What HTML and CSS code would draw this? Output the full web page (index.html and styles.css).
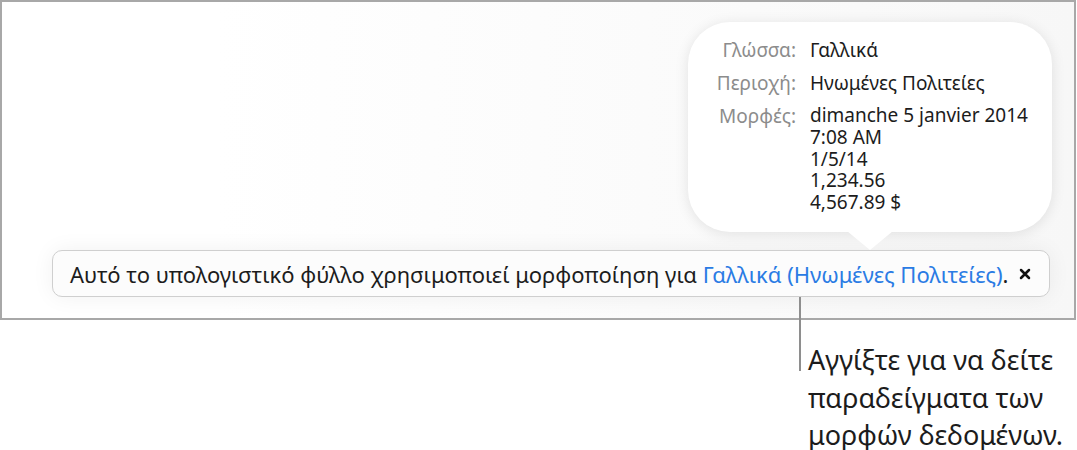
FILE: index.html
```html
<!DOCTYPE html>
<html lang="el">
<head>
<meta charset="utf-8">
<title>Μορφοποίηση</title>
<link rel="stylesheet" href="styles.css">
</head>
<body>
  <div class="screen">
    <div class="popover">
      <div class="info-grid">
        <span class="label">Γλώσσα:</span>
        <span class="value">Γαλλικά</span>
        <span class="label">Περιοχή:</span>
        <span class="value">Ηνωμένες Πολιτείες</span>
        <span class="label">Μορφές:</span>
        <span class="value formats">
          <span>dimanche 5 janvier 2014</span>
          <span>7:08 AM</span>
          <span>1/5/14</span>
          <span>1,234.56</span>
          <span>4,567.89 $</span>
        </span>
      </div>
    </div>
    <div class="banner">
      <p class="banner-text">Αυτό το υπολογιστικό φύλλο χρησιμοποιεί μορφοποίηση για <span class="link">Γαλλικά (Ηνωμένες Πολιτείες)</span>.</p>
      <span class="close" aria-label="Κλείσιμο">
        <svg width="12" height="12" viewBox="0 0 12 12"><path d="M2 2 L10 10 M10 2 L2 10" stroke="#111" stroke-width="2.5" stroke-linecap="round"/></svg>
      </span>
    </div>
  </div>
  <div class="callout">
    <p class="callout-text">Αγγίξτε για να δείτε<br>παραδείγματα των<br>μορφών δεδομένων.</p>
  </div>
</body>
</html>
```
FILE: styles.css
```css
* { box-sizing: border-box; }

body {
  margin: 0;
  background: #ffffff;
  font-family: "Noto Sans", Roboto, "Liberation Sans", sans-serif;
  color: #1c1c1c;
}

.screen {
  position: relative;
  width: 1076px;
  height: 320px;
  border: 2px solid #a8a8a8;
  background: linear-gradient(to right, #ffffff 0%, #ffffff 20%, #f7f7f7 100%);
  padding: 248px 24px 0 50px;
}

/* format details bubble */
.popover {
  position: absolute;
  left: 686px;
  top: 20px;
  width: 364px;
  height: 210px;
  background: #ffffff;
  border-radius: 42px;
  box-shadow: 0 2px 14px rgba(0, 0, 0, 0.10);
  padding: 17px 0 0 25px;
}

.popover::after {
  content: "";
  position: absolute;
  left: 159px;
  bottom: -18px;
  width: 46px;
  height: 19px;
  background: #ffffff;
  clip-path: polygon(0 0, 100% 0, 50% 100%);
}

.info-grid {
  display: grid;
  grid-template-columns: 83px auto;
  column-gap: 14px;
  row-gap: 11px;
  font-size: 19px;
  line-height: 22px;
}

.label {
  color: #8c8c8c;
  text-align: right;
  white-space: nowrap;
}

.value {
  color: #1c1c1c;
  white-space: nowrap;
}

.formats {
  display: flex;
  flex-direction: column;
  line-height: 21.8px;
}

/* locale notice bar */
.banner {
  display: flex;
  align-items: center;
  width: 998px;
  height: 47px;
  background: #fcfcfc;
  border: 1px solid #cfcfcf;
  border-radius: 10px;
  box-shadow: 0 0 22px rgba(0, 0, 0, 0.06);
  padding: 0 18px 0 17px;
}

.banner-text {
  margin: 0;
  flex: 1;
  font-size: 22px;
  color: #1c1c1c;
  white-space: nowrap;
}

.link { color: #2a7be4; }

.close {
  display: flex;
  width: 12px;
  height: 12px;
}

/* annotation below the screen */
.callout {
  position: relative;
  padding: 21px 0 0 808px;
}

.callout::before {
  content: "";
  position: absolute;
  left: 799px;
  top: -23px;
  width: 2px;
  height: 74px;
  background: #8e8e8e;
}

.callout-text {
  margin: 0;
  font-size: 27px;
  line-height: 37.5px;
  color: #1c1c1c;
  white-space: nowrap;
}
```
